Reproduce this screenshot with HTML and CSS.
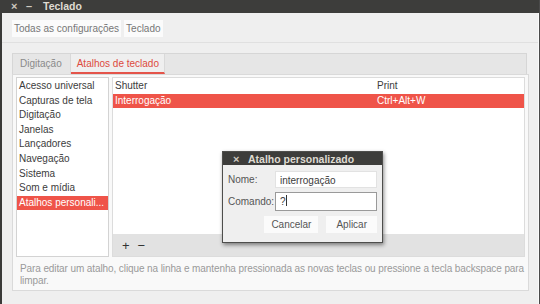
FILE: index.html
```html
<!DOCTYPE html>
<html lang="pt">
<head>
    <meta charset="UTF-8">
    <title>Teclado</title>
    <link rel="stylesheet" href="styles.css">
</head>
<body>

    <div class="window">
        <div class="titlebar">
            <span class="tb-btn">×</span>
            <span class="tb-btn">–</span>
            <span class="tb-title">Teclado</span>
        </div>

        <div class="pathbar">
            <span class="crumb">Todas as configurações</span>
            <span class="crumb">Teclado</span>
        </div>

        <div class="main">
            <div class="tabs">
                <div class="tab">Digitação</div>
                <div class="tab active">Atalhos de teclado</div>
            </div>
            <div class="page">
                <div class="panes">
                    <ul class="sections">
                        <li>Acesso universal</li>
                        <li>Capturas de tela</li>
                        <li>Digitação</li>
                        <li>Janelas</li>
                        <li>Lançadores</li>
                        <li>Navegação</li>
                        <li>Sistema</li>
                        <li>Som e mídia</li>
                        <li class="selected">Atalhos personali...</li>
                    </ul>
                    <div class="shortcuts">
                        <div class="tree">
                            <div class="row">
                                <span class="name">Shutter</span>
                                <span class="accel">Print</span>
                            </div>
                            <div class="row selected">
                                <span class="name">Interrogação</span>
                                <span class="accel">Ctrl+Alt+W</span>
                            </div>
                        </div>
                        <div class="tree-tools">
                            <span class="tool">+</span>
                            <span class="tool">−</span>
                        </div>
                    </div>
                </div>
                <p class="help">Para editar um atalho, clique na linha e mantenha pressionada as novas teclas ou pressione a tecla backspace para limpar.</p>
            </div>
        </div>
    </div>

    <div class="dialog">
        <div class="dlg-title">
            <span class="tb-btn">×</span>
            <span class="tb-title">Atalho personalizado</span>
        </div>
        <div class="dlg-body">
            <div class="field">
                <label>Nome:</label>
                <div class="entry">interrogação</div>
            </div>
            <div class="field">
                <label>Comando:</label>
                <div class="entry focus">?<span class="caret"></span></div>
            </div>
            <div class="dlg-buttons">
                <span class="btn">Cancelar</span>
                <span class="btn">Aplicar</span>
            </div>
        </div>
    </div>

</body>
</html>
```

FILE: styles.css
```css
body {
    margin: 0;
    width: 540px;
    height: 304px;
    overflow: hidden;
    position: relative;
    background: #4a4a4a;
    font-family: "Liberation Sans", Arial, sans-serif;
    font-size: 10px;
    color: #3c3c3c;
}
.window {
    width: 536px;
    height: 304px;
    border-left: 2px solid #3a3a38;
    border-right: 1px solid #fafafa;
    background: #efefef;
    display: flex;
    flex-direction: column;
}
.titlebar {
    height: 13px;
    margin-left: -2px;
    margin-right: -1px;
    padding-left: 11px;
    background: #3d3d3b;
    color: #dfdbd2;
    display: flex;
    align-items: center;
    line-height: 13px;
}
.tb-btn {
    width: 15px;
    font-size: 11px;
    font-weight: bold;
    color: #cfcac0;
}
.tb-title {
    margin-left: 2px;
    font-weight: bold;
    font-size: 10.5px;
}
.pathbar {
    height: 30px;
    box-sizing: border-box;
    padding: 7px 0 0 10px;
    border-bottom: 1px solid #e0e0e0;
    display: flex;
    gap: 3px;
}
.crumb {
    height: 17px;
    line-height: 17px;
    padding: 0 2px;
    background: #fbfbfb;
    color: #777;
}
.main {
    padding: 10px 9px 0 10px;
}
.tabs {
    height: 20px;
    margin-right: 2px;
    background: #e6e6e6;
    border: 1px solid #d6d6d6;
    border-bottom: none;
    display: flex;
}
.tab {
    padding: 0 8px 0 7px;
    line-height: 19px;
    color: #8a8a8a;
    border-right: 1px solid #d9d9d9;
}
.tab.active {
    padding: 0 5px 0 6px;
    background: #efefef;
    color: #dd4a3e;
    border-bottom: 2px solid #e4544a;
    height: 18px;
}
.page {
    height: 217px;
    box-sizing: border-box;
    border: 1px solid #dadada;
    background: #f9f9f9;
    padding: 2px 2px 0 3px;
}
.panes {
    display: flex;
    gap: 3px;
    height: 180px;
}
.sections {
    list-style: none;
    margin: 0;
    padding: 1px 0 0;
    width: 93px;
    box-sizing: border-box;
    border: 1px solid #d3d3d3;
    background: #fff;
}
.sections li {
    height: 14.6px;
    line-height: 14.6px;
    padding-left: 2px;
    white-space: nowrap;
    overflow: hidden;
}
.sections li.selected {
    background: #ef5449;
    color: #fff;
}
.shortcuts {
    width: 413px;
    display: flex;
    flex-direction: column;
    border: 1px solid #dcdcdc;
    box-sizing: border-box;
}
.tree {
    flex: 1;
    background: #fff;
    padding-top: 1px;
}
.row {
    display: flex;
    height: 14.5px;
    line-height: 14.5px;
}
.row.selected {
    background: #ef5449;
    color: #fff;
}
.name {
    width: 262px;
    padding-left: 2px;
}
.tree-tools {
    height: 22px;
    background: #e2e2e2;
    display: flex;
    align-items: center;
    gap: 8px;
    padding-left: 9px;
}
.tool {
    font-size: 13px;
    color: #333;
}
.help {
    margin: 6px 0 0;
    padding-left: 4px;
    line-height: 12px;
    color: #9a9a9a;
    letter-spacing: -0.1px;
}
.dialog {
    position: absolute;
    left: 222px;
    top: 151px;
    width: 161px;
    height: 92px;
    box-sizing: border-box;
    background: #efefef;
    border: 1px solid #4e4e4c;
    box-shadow: 1px 2px 4px rgba(0, 0, 0, 0.45);
}
.dlg-title {
    height: 13px;
    background: #3d3d3b;
    color: #dfdbd2;
    display: flex;
    align-items: center;
    padding-left: 10px;
}
.dlg-title .tb-btn {
    width: 13px;
}
.dlg-body {
    padding: 6px 5px 0 5px;
}
.field {
    display: flex;
    align-items: center;
    margin-bottom: 4px;
}
.field label {
    width: 47px;
    color: #555;
}
.entry {
    width: 102px;
    height: 17px;
    line-height: 17px;
    box-sizing: border-box;
    padding-left: 4px;
    background: #fff;
    border: 1px solid #e2e2e2;
}
.entry.focus {
    height: 19px;
    border-color: #9a9a9a;
    line-height: 17px;
}
.caret {
    display: inline-block;
    width: 1px;
    height: 11px;
    background: #333;
    vertical-align: -1px;
}
.dlg-buttons {
    display: flex;
    justify-content: flex-end;
    gap: 8px;
    margin-top: 5px;
}
.btn {
    height: 17px;
    line-height: 17px;
    background: #fbfbfb;
    color: #555;
    padding: 0 7px;
}
.btn + .btn {
    padding: 0 10px;
}
```
